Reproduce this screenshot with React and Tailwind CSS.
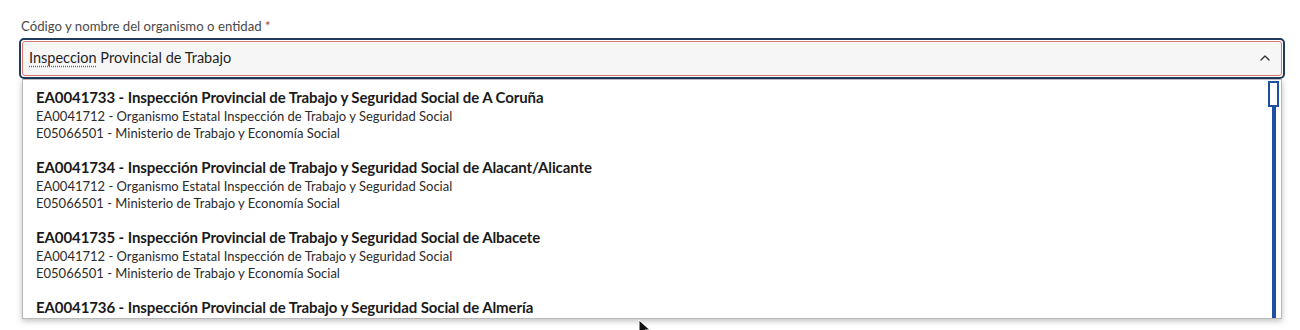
import React from "react";
import { ChevronUp } from "lucide-react";

const items = [
  { code: "EA0041733", name: "Inspección Provincial de Trabajo y Seguridad Social de A Coruña" },
  { code: "EA0041734", name: "Inspección Provincial de Trabajo y Seguridad Social de Alacant/Alicante" },
  { code: "EA0041735", name: "Inspección Provincial de Trabajo y Seguridad Social de Albacete" },
  { code: "EA0041736", name: "Inspección Provincial de Trabajo y Seguridad Social de Almería", partial: true },
];

const App = () => {
  return (
    <div className="w-[1300px] h-[330px] bg-white overflow-hidden relative font-['Lato','Noto_Sans',sans-serif] text-[#1f1f1f]">
      <div className="pl-[21px] pt-[17px] text-[13.2px] leading-[18px] text-[#4a4a4a]">
        Código y nombre del organismo o entidad <span className="text-[#c0392b]">*</span>
      </div>

      <div className="relative ml-[19px] mt-[3px] w-[1266px]">
        {/* input */}
        <div className="h-[41px] rounded-[5px] border-2 border-[#1e3a5c] p-[1px]">
          <div className="h-full rounded-[3px] border-[1.5px] border-[#d9786c] bg-[#f6f6f6] flex items-center justify-between pl-[6px] pr-[8px] pb-[1px]">
            <span className="text-[14.5px]">
              <span className="underline decoration-dotted decoration-[#d33] underline-offset-[3px]">Inspeccion</span> Provincial de Trabajo
            </span>
            <ChevronUp className="w-[16px] h-[16px] text-[#333]" strokeWidth={2} />
          </div>
        </div>

        {/* content behind dropdown */}
        <div className="ml-[10px] mr-[11px] h-[40px] border-x border-[#9a9a9a]"></div>

        {/* dropdown */}
        <div className="absolute left-[3px] top-[41px] w-[1260px] h-[240px] bg-white border border-[#b8b8b8] shadow-[0_2px_6px_rgba(0,0,0,0.25)] overflow-hidden flex">
          <div className="flex-1 flex flex-col">
            {items.map((it) => (
              <div key={it.code} className="pl-[13px] pt-[7px] pb-[8px]">
                <div className="text-[15px] leading-[20px] font-bold text-[#1a1a1a] tracking-[-0.1px]">
                  {it.code} - {it.name}
                </div>
                {!it.partial && (
                  <>
                    <div className="text-[13px] leading-[17px] text-[#2b2b2b] mt-[1px]">
                      EA0041712 - Organismo Estatal Inspección de Trabajo y Seguridad Social
                    </div>
                    <div className="text-[13px] leading-[17px] text-[#2b2b2b]">
                      E05066501 - Ministerio de Trabajo y Economía Social
                    </div>
                  </>
                )}
              </div>
            ))}
          </div>
          <div className="w-[15px] flex flex-col items-center pt-[1px]">
            <div className="w-[11px] h-[26px] border-2 border-[#1f4fa0] bg-white"></div>
            <div className="w-[4px] flex-1 bg-[#1f4fa0]"></div>
          </div>
        </div>
      </div>

      {/* cursor */}
      <svg className="absolute left-[638px] top-[319px]" width="14" height="20" viewBox="0 0 14 20">
        <path d="M1 1 L1 16 L5 12 L8 19 L10 18 L7 11 L12 11 Z" fill="#111" stroke="#fff" strokeWidth="1" />
      </svg>
    </div>
  );
};

export default App;
